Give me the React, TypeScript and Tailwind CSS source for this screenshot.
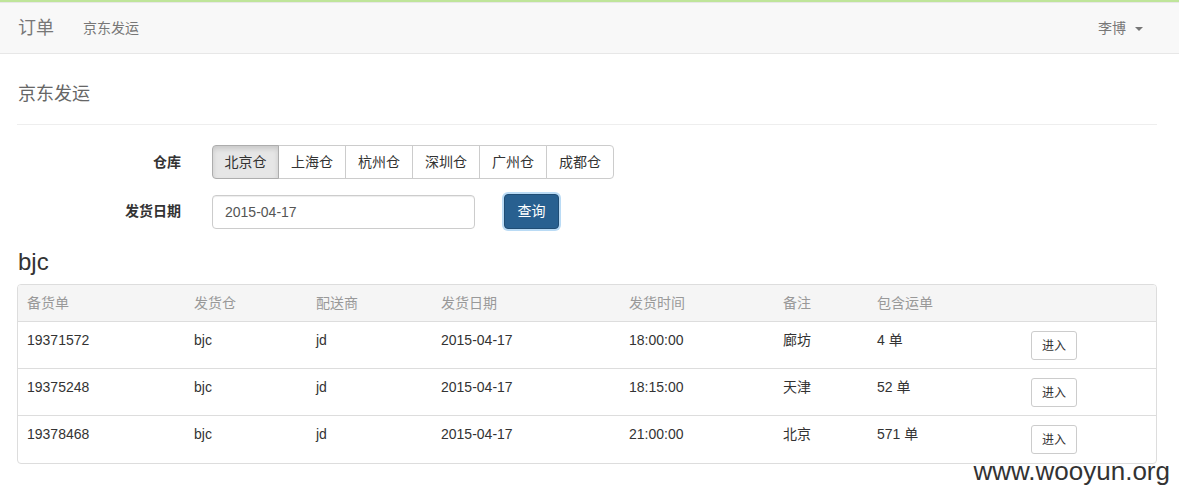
import { useState } from "react";

const warehouses = ["北京仓", "上海仓", "杭州仓", "深圳仓", "广州仓", "成都仓"];

const rows = [
  { id: "19371572", wh: "bjc", carrier: "jd", date: "2015-04-17", time: "18:00:00", note: "廊坊", count: "4 单" },
  { id: "19375248", wh: "bjc", carrier: "jd", date: "2015-04-17", time: "18:15:00", note: "天津", count: "52 单" },
  { id: "19378468", wh: "bjc", carrier: "jd", date: "2015-04-17", time: "21:00:00", note: "北京", count: "571 单" },
];

const cols = "grid grid-cols-[167px_122px_125px_188px_154px_94px_154px_1fr]";

export default function App() {
  const [active, setActive] = useState(0);
  const [date, setDate] = useState("2015-04-17");

  return (
    <div
      className="relative min-h-[500px] bg-white text-[14px] text-[#333]"
      style={{ fontFamily: '"Liberation Sans", Arial, "Noto Sans CJK SC", sans-serif' }}
    >
      <div className="h-[2px] bg-[#bfe59a]" />
      <nav className="flex h-[52px] items-center border-y border-[#e7e7e7] bg-[#f8f8f8] pr-[36px]">
        <a className="pl-[18px] text-[18px] text-[#777]">订单</a>
        <a className="pl-[29px] text-[14px] text-[#777]">京东发运</a>
        <div className="ml-auto flex items-center gap-[9px] text-[14px] text-[#777]">
          <span>李博</span>
          <span className="mt-[1px] h-0 w-0 border-x-[4px] border-t-[4px] border-x-transparent border-t-[#777]" />
        </div>
      </nav>

      <main className="pr-[22px] pl-[17px]">
        <div className="border-b border-[#eee] pt-[27px] pb-[17px]">
          <h1 className="pl-[1px] text-[18px] leading-[26px] font-normal text-[#666]">京东发运</h1>
        </div>

        <form className="mt-[20px] flex flex-col gap-[15px]" onSubmit={(e) => e.preventDefault()}>
          <div className="flex items-center">
            <label className="w-[164px] text-right font-bold text-[#333]">仓库</label>
            <div className="ml-[31px] flex">
              {warehouses.map((w, i) => (
                <button
                  key={w}
                  type="button"
                  onClick={() => setActive(i)}
                  className={
                    "h-[34px] border text-[14px] " +
                    (i === 0 ? "w-[67px] rounded-l-[4px] " : "-ml-px w-[68px] ") +
                    (i === warehouses.length - 1 ? "rounded-r-[4px] " : "") +
                    (i === active
                      ? "z-10 border-[#adadad] bg-[#e6e6e6] shadow-[inset_0_3px_5px_rgba(0,0,0,0.125)]"
                      : "border-[#ccc] bg-white")
                  }
                >
                  {w}
                </button>
              ))}
            </div>
          </div>
          <div className="flex items-center">
            <label className="w-[164px] text-right font-bold text-[#333]">发货日期</label>
            <input
              value={date}
              onChange={(e) => setDate(e.target.value)}
              className="ml-[31px] h-[34px] w-[263px] rounded-[4px] border border-[#ccc] px-[12px] text-[14px] text-[#555] shadow-[inset_0_1px_1px_rgba(0,0,0,0.075)] outline-none"
            />
            <button
              type="submit"
              className="ml-[29px] h-[35px] w-[55px] rounded-[4px] border border-[#204d74] bg-[#286090] text-[14px] text-white shadow-[0_0_0_2px_rgba(102,175,233,0.45)]"
            >
              查询
            </button>
          </div>
        </form>

        <h3 className="mt-[19px] pl-[1px] text-[24px] leading-[28px] text-[#333]">bjc</h3>

        <div className="mt-[8px] overflow-hidden rounded-[4px] border border-[#ddd]">
          <div className={cols + " h-[37px] items-center border-b border-[#ddd] bg-[#f5f5f5] pl-[9px] text-[#999]"}>
            <div>备货单</div>
            <div>发货仓</div>
            <div>配送商</div>
            <div>发货日期</div>
            <div>发货时间</div>
            <div>备注</div>
            <div>包含运单</div>
            <div />
          </div>
          {rows.map((r, i) => (
            <div
              key={r.id}
              className={cols + " h-[47px] pl-[9px] " + (i < rows.length - 1 ? "border-b border-[#ddd]" : "")}
            >
              <div className="pt-[8px] leading-[20px]">{r.id}</div>
              <div className="pt-[8px] leading-[20px]">{r.wh}</div>
              <div className="pt-[8px] leading-[20px]">{r.carrier}</div>
              <div className="pt-[8px] leading-[20px]">{r.date}</div>
              <div className="pt-[8px] leading-[20px]">{r.time}</div>
              <div className="pt-[8px] leading-[20px]">{r.note}</div>
              <div className="pt-[8px] leading-[20px]">{r.count}</div>
              <div className="pt-[9px]">
                <button className="h-[29px] w-[46px] rounded-[3px] border border-[#ccc] bg-white text-[12px] text-[#333]">
                  进入
                </button>
              </div>
            </div>
          ))}
        </div>
      </main>

      <div className="absolute top-[456px] right-[9px] text-[26px] leading-[30px] text-[#333]">www.wooyun.org</div>
    </div>
  );
}
